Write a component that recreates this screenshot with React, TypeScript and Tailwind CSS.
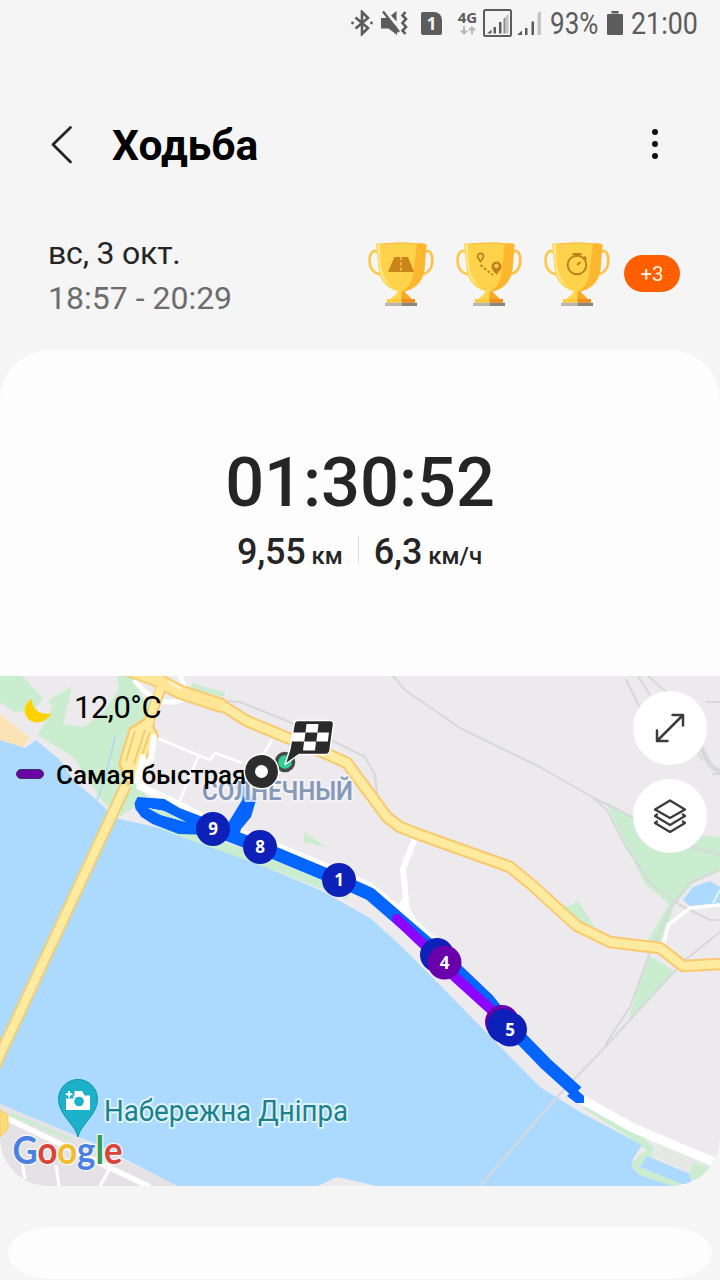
import type { ReactNode } from "react";

interface MarkerData {
  x: number;
  y: number;
  label?: string;
  color: string;
}

const BLUE = "#0d20b8";
const PURPLE = "#6a00ab";

const markers: MarkerData[] = [
  { x: 213, y: 829, label: "9", color: BLUE },
  { x: 260, y: 847, label: "8", color: BLUE },
  { x: 339, y: 880, label: "1", color: BLUE },
  { x: 437, y: 955, color: BLUE },
  { x: 444.5, y: 962.5, label: "4", color: PURPLE },
  { x: 502, y: 1022, color: PURPLE },
  { x: 504, y: 1026, color: BLUE },
  { x: 510, y: 1029.5, label: "5", color: BLUE },
];

const MOTORWAY =
  "M127 669l28 10 25 13 43 14 24 15 36 15 44 18 20 9 40 54 13 10 15 6 95 34 22 18 45 41 33 16 50 6 23 18 37-2";

const StatusBar = () => (
  <div className="flex h-12 shrink-0 items-center justify-end pr-[22px] text-[#5c5c5c]">
    <svg className="-mt-[2px] h-[26px] w-[22px]" viewBox="0 0 22 26" fill="none" stroke="currentColor">
      <path d="M4.500 7.500L17 18l-6 6V2l6 6L4.500 18.500" strokeWidth="2.600" />
      <circle cx="1.500" cy="13" r="1.400" fill="currentColor" stroke="none" />
      <circle cx="20.500" cy="13" r="1.400" fill="currentColor" stroke="none" />
    </svg>
    <svg className="-mt-[2px] ml-2 h-[26px] w-[27px]" viewBox="0 0 27 26" fill="currentColor">
      <path d="M0 8h6l10 9v8L7.500 18.500H0z" />
      <path d="M10 5.500L15.500 1v10.500z" />
      <path d="M2 1.500l16 20.500" stroke="currentColor" strokeWidth="2.400" />
      <path d="M24.500 2l-3 3.500 3.500 3.500-3.500 4 3.500 4-3.500 3.500 3 3.500" fill="none" stroke="currentColor" strokeWidth="2.600" />
    </svg>
    <div className="-mt-[2px] ml-[13px] flex h-[23px] w-[21px] items-center justify-center rounded-[2px] rounded-tr-[8px] bg-[#5c5c5c] font-['Open_Sans'] text-[17px] leading-none font-bold text-[#f5f5f5]">
      1
    </div>
    <div className="-mt-[2px] ml-[15px] flex h-[26px] w-[21px] flex-col items-center">
      <span className="font-['Open_Sans'] text-[15px] leading-[15px] font-bold">4G</span>
      <svg className="mt-px h-[9px] w-[16px]" viewBox="0 0 16 9" fill="none" stroke="#b9b9b9" strokeWidth="2">
        <path d="M4 0v7M1 4.500l3 3 3-3M12 8.500V1.500M9 4.500l3-3 3 3" />
      </svg>
    </div>
    <svg className="-mt-[2px] ml-[5px] h-[28px] w-[29px]" viewBox="0 0 29 28">
      <rect x="1" y="1" width="27" height="26" rx="1.500" fill="none" stroke="currentColor" strokeWidth="2" />
      <path d="M4 24.500l4.500-4v4zM10.500 18h2.500v6.500h-2.500zM16 13h2.500v11.500H16z" fill="currentColor" />
      <path d="M20.500 9.500L22.500 8v16.500h-2z" fill="#8b8b8b" />
      <path d="M23 7l2.500-2v19.500H23z" fill="#c3c3c3" />
    </svg>
    <svg className="-mt-[2px] ml-[5px] h-[28px] w-[24px]" viewBox="0 0 24 28">
      <path d="M0 26l5-4.500V26zM8 19h2.500v7H8zM14.500 12.500H17V26h-2.500z" fill="currentColor" />
      <path d="M20.500 4.500L24 2v24h-3.500z" fill="#c3c3c3" />
    </svg>
    <span className="-mt-px ml-[9px] w-[49px] font-[Roboto] text-[31px] leading-none">
      <span className="inline-block origin-left scale-x-[0.84]">93%</span>
    </span>
    <svg className="-mt-[2px] ml-[8px] h-[24px] w-[16px]" viewBox="0 0 16 24" fill="currentColor">
      <path d="M4.500 0h7v2.500h-7zM1 3h14a1 1 0 0 1 1 1v19a1 1 0 0 1-1 1H1a1 1 0 0 1-1-1V4a1 1 0 0 1 1-1z" />
    </svg>
    <span className="-mt-px ml-[8px] w-[67px] font-[Roboto] text-[31px] leading-none">
      <span className="inline-block origin-left scale-x-[0.865]">21:00</span>
    </span>
  </div>
);

const Trophy = ({ children }: { children: ReactNode }) => (
  <svg className="h-[66px] w-[66px]" viewBox="0 0 66 66">
    <path d="M9.500 9.500C4 7 1.500 13 1.600 19c.2 7 4 13 12.500 13.500" fill="none" stroke="#fbca4c" strokeWidth="2.800" />
    <path d="M57 9.500c5.500-2.500 7.500 3.500 7.300 9.500-.2 7-4 13-12.500 13.500" fill="none" stroke="#fbc24a" strokeWidth="2.800" />
    <path d="M31 47h5l2 4.500 6 5.500H22.500l6-5.500z" fill="#ffd54c" />
    <path d="M34 47h2l2 4.500 6 5.500H33z" fill="#f9a825" />
    <path d="M8 2q25.500-3 50.500 0L56.500 27C55 41 44 49.500 33.500 49.500S12 41 10.500 27z" fill="#fed24b" />
    <path d="M49 1.300l9.500.7L56.500 27C55 41 44 49.500 33.500 49.500c7-3 11-10 12-19z" fill="#fdb72f" />
    <path d="M12 2.500C12.500 20 12 35 24 44.500 14.500 40 12 33 11 24L9 3z" fill="#ffe68c" />
    <path d="M8 2q25.500-3 50.500 0-25-1-50.500 0z" fill="#f9b93a" />
    <path d="M19 57h14.500v3.800H19z" fill="#ffca3a" />
    <path d="M33.500 57H47v3.800H33.500z" fill="#f08f1c" />
    <path d="M17 60.800h16.500V64H17z" fill="#b9b5ad" />
    <path d="M33.500 60.800H49V64H33.500z" fill="#8d8579" />
    {children}
  </svg>
);

const RoadIcon = () => (
  <g>
    <path d="M26.500 15H40l6 15H20z" fill="#cb831b" />
    <path d="M33 15v15" stroke="#f8c746" strokeWidth="1.600" strokeDasharray="3 2.200" />
  </g>
);

const RouteIcon = () => (
  <g fill="none" stroke="#c07f1b">
    <path d="M24.500 19.500c-1.800-2.500-2.900-3.500-2.900-5.200a2.900 2.900 0 0 1 5.800 0c0 1.700-1.100 2.700-2.900 5.200z" strokeWidth="1.700" />
    <path d="M40.500 33c-2.500-4-5-5.500-5-8.500a5 5 0 0 1 10 0c0 3-2.500 4.500-5 8.500z" fill="#c07f1b" stroke="none" />
    <circle cx="40.500" cy="24" r="2.300" fill="#f8c746" stroke="none" />
    <path d="M24.500 23l6 5 6.500 5" strokeWidth="1.700" strokeDasharray="2.700 2" />
  </g>
);

const TimerIcon = () => (
  <g fill="none" stroke="#c07f1b" strokeWidth="1.900">
    <circle cx="33" cy="23" r="9.300" />
    <path d="M28.500 12h9M33 12v2M39.500 14.500l3 2.500M33 23l3.500-3" />
  </g>
);

const HeaderBar = () => (
  <header className="flex h-[194px] shrink-0 items-center justify-between pr-[62px] pl-[49px]">
    <div className="flex items-center">
      <svg className="-mt-px h-[40px] w-[24px]" viewBox="0 0 24 40" fill="none" stroke="#252525" strokeWidth="2.800" strokeLinecap="round" strokeLinejoin="round">
        <path d="M21.500 2.500L4 19.500 21.500 37" />
      </svg>
      <h1 className="mt-[2px] ml-[39px] font-[Roboto] text-[42.500px] leading-none font-bold text-black">Ходьба</h1>
    </div>
    <div className="-mt-[2px] flex flex-col gap-[6px]">
      <span className="size-[6px] rounded-full bg-[#111]" />
      <span className="size-[6px] rounded-full bg-[#111]" />
      <span className="size-[6px] rounded-full bg-[#111]" />
    </div>
  </header>
);

const WorkoutInfo = () => (
  <section className="flex h-[108px] shrink-0 items-start justify-between pr-10 pl-[49px]">
    <div className="-mt-[11px] font-[Roboto] text-[32px] leading-[45px]">
      <p className="-ml-px tracking-[-0.2px] text-[#252525]">вс, 3 окт.</p>
      <p className="-ml-px text-[#6c6c6c]">18:57 - 20:29</p>
    </div>
    <div className="flex items-start">
      <div className="flex gap-[22px]">
        <Trophy>
          <RoadIcon />
        </Trophy>
        <Trophy>
          <RouteIcon />
        </Trophy>
        <Trophy>
          <TimerIcon />
        </Trophy>
      </div>
      <span className="mt-[13px] ml-[14px] flex h-[37px] w-[56px] items-center justify-center rounded-full bg-[#ff5f00] pt-[2px] font-[Roboto] text-[20.500px] text-[#fff3e0]">
        +3
      </span>
    </div>
  </section>
);

const Summary = () => (
  <div className="flex h-[326px] flex-col items-center pt-[98px] font-[Roboto] font-medium text-[#252525]">
    <p className="text-[68.500px] leading-[70px]">01:30:52</p>
    <div className="mt-[16px] mr-px flex items-center">
      <p className="flex items-baseline gap-[6px] leading-[36px]">
        <span className="text-[36px] tracking-[-0.2px]">9,55</span>
        <span className="text-[24px]">км</span>
      </p>
      <span className="mr-[15px] ml-[15px] -mt-[8px] h-[28px] w-px bg-[#dedede]" />
      <p className="flex items-baseline gap-[6px] leading-[36px]">
        <span className="text-[36px] tracking-[-0.2px]">6,3</span>
        <span className="text-[24px]">км/ч</span>
      </p>
    </div>
  </div>
);

const MapCanvas = () => (
  <svg className="block h-[510px] w-[720px]" viewBox="0 676 720 510" strokeLinejoin="round">
    <rect x="0" y="676" width="720" height="510" fill="#eceaed" />

    {/* parks */}
    <g fill="#caedcf">
      <path d="M0 676h22l21 23-10 12-18 1-15-10z" />
      <path d="M48 701l24-15-9 38 20 3 20-14 16-24-2-13h16l8 20 15 10-10 30-15 20 3 22 15 22-16 8-12 8-18-14-30-45-35-22 15-28z" />
      <path d="M192 683l34 10-3 4-32-8zM304 832l22 15-22-5z" />
      <path d="M605 801l28 16 60 18 27 2v32l-26 13-20 24-5 16-9 20h-13l22-38-24-20z" />
      <path d="M648 955l26 16-46 51 4-15zM565 908l13-7 19 30-14-4z" />
    </g>
    <path d="M0 714l30 24-8 10-22-8z" fill="#fbe3b5" />

    {/* river */}
    <path
      d="M0 740l25 8 11-8 24 20 15 22 22 18 18 18 45 10 40 12 65 27 55 23 50 28 30 27 30 30 110 112 40 25 62 33-9 14v10l44 17H377l-40-9-19 9H177L100 1146 0 1104z"
      fill="#acdaff"
    />
    <path d="M115 736l-4 18-7 28-7 18" fill="none" stroke="#b1d5f5" strokeWidth="1.500" />
    <path d="M160 829l105 38 55 21 28 12-4-10-84-36-95-31z" fill="#caedcf" />
    <path d="M586 1106l56 35 12 12-10 3-9 9 6 7 40 13" fill="none" stroke="#caedcf" strokeWidth="7" />
    <path d="M650 1154l44 21 14 12 12-3v-26l-60-15z" fill="#e5e8e5" />
    <path d="M647 1156l48 20-8 10-47-19z" fill="#acdaff" />
    <path d="M693 1163l22 6v16h-12l-14-8z" fill="#caedcf" />
    <path d="M683 900l10-13 17-6 10 6v16l-30 3z" fill="#acdaff" />
    <path d="M713 903l7-13" stroke="#e4f4e8" strokeWidth="2" />

    {/* south bank */}
    <path d="M0 1104l100 44 77 38H0z" fill="#e5e2e6" />
    <path d="M10 1114l62 26" stroke="#caedcf" strokeWidth="3" />
    <path d="M0 1115l150 72" stroke="#fff" strokeWidth="5.500" />
    <path d="M22 1162l3 17M56 1165l3 21M109 1170l-9 16" stroke="#fff" strokeWidth="3" />
    <path d="M0 1110l8 5v14l-8 8z" fill="#fddb7b" stroke="#f8c866" />

    {/* railways */}
    <g fill="none" stroke="#d6d8da" strokeWidth="2">
      <path d="M393 676l12 14 55 38 80 39 52 30 40 20 60 30 28 8" />
      <path d="M592 797l15 13 18 35 25 38 30 22 30 15h10M720 870l-32 14-17 24" />
      <path d="M720 932l-35 28-57 62-21 23-50 52-37 43-40 46M673 903l-25 55-18 49-25 38" />
      <path d="M225 701l15 1 45 18 50 22 30 15 10 18 2 20M180 690l-40-14" />
      <path d="M626 679l8 17 6 12M638 676l12 19M648 676l18 16M706 702h14M697 752l6 9M712 774h8" />
      <path d="M700 746l10 19 12 9" strokeWidth="5" />
    </g>

    {/* streets */}
    <g fill="none" stroke="#fff">
      <path d="M157 738l53 22 5-7 27 10M198 757l-19 46M272 740l-10 17" strokeWidth="2.500" />
      <path d="M137 785l28 13 48 24 47 17 79 33 31 14 35 29 50 44" strokeWidth="7" />
      <path d="M415 838l-12 31 4 41" strokeWidth="6" />
      <path d="M404 898l9 17 8 17-25-24z" fill="#fff" />
      <path d="M583 1100l50 28 81 34" strokeWidth="9" />
      <path d="M720 905l-30 3-22 17-5 21" strokeWidth="3.500" />
      <path d="M134 680q18 22 36 22t16-12l-6-14" strokeWidth="5" />
    </g>

    {/* motorway and bridge: casing first, light fill on top */}
    <g fill="none">
      <g stroke="#fac96d">
        <path d="M126 785L-8 1072" stroke="#ecd082" strokeWidth="12.500" />
        <path d="M148 726l4-14 10-26" strokeWidth="11" />
        <path d="M119 764l11-36 19-12 9 20-8 16-13 26-9 7z" fill="#fac96d" strokeWidth="2" />
        <path d={MOTORWAY} strokeWidth="12.500" />
        <path d="M122 667l33 12 25 13 43 14" strokeWidth="15" />
      </g>
      <g stroke="#ffeb9f">
        <path d="M126 785L-8 1072" strokeWidth="8" />
        <path d="M148 726l4-14 10-28" strokeWidth="8" />
        <path d="M121 763l10-33 17-11 8 17-8 15-13 26-6 5z" fill="#ffeb9f" strokeWidth="1" />
        <path d={MOTORWAY} strokeWidth="8.500" />
        <path d="M122 667l33 12 25 13 43 14" stroke="#ffe594" strokeWidth="11.500" />
      </g>
      <path d="M126 761l9-30M134 764l11-34M141 758l9-26" stroke="#f5c964" strokeWidth="1.800" />
      <path d="M168 682l14 7" stroke="#fff3d6" strokeWidth="2" />
    </g>
    <path d="M154 737l-3 22-5 4M143 757l-6 24 8 8" fill="none" stroke="#fff" strokeWidth="6" strokeLinecap="round" />

    {/* walked route */}
    <path d="M246 780l9 20-12 1-8-14z" fill="#7fb3f8" />
    <path d="M244 797h13l-6 20-10 12-2 8-14-9z" fill="#0465ff" />
    <path
      d="M134.500 803l3-6 27 2 15 9 26 10 10 12-5 5-32-1-26-10-11-7-6-8zM148 808l13 7 25 7-22-11z"
      fill="#0465ff"
      fillRule="evenodd"
    />
    <path d="M148 808l13 7 25 7-22-11z" fill="#caedcf" />
    <path d="M205 826l55 21 79 33 31 14 30 26 44 38 44 42 20 25 38 39 31 28" fill="none" stroke="#0465ff" strokeWidth="13" />
    <path d="M575 1088l9 8v7h-8l-9-7z" fill="#0465ff" />
    <path d="M397 919l44 42M444 967l52 47" stroke="#8e05ff" strokeWidth="10" strokeLinecap="round" />

    <g fontFamily="Roboto" paintOrder="stroke" strokeWidth="4">
      <text x="202" y="800" fontSize="25.500" fontWeight="600" textLength="151" lengthAdjust="spacingAndGlyphs" fill="#8799b8" stroke="#f6f6fa" strokeOpacity=".8">
        СОЛНЕЧНЫЙ
      </text>
      <text x="104" y="1120.500" fontSize="29.500" textLength="244" lengthAdjust="spacingAndGlyphs" fill="#1b818c" stroke="#def3fd">
        Набережна Дніпра
      </text>
    </g>

    {/* place pin */}
    <path d="M78 1137c-2-12-19.500-22-19.500-38a19.500 19.500 0 0 1 39 0c0 16-17.500 26-19.500 38z" fill="#1cb1c8" stroke="#1594a7" />
    <path d="M66 1095.500h8.500V1091H82l2.500 4.500h5.500V1110H66z" fill="#fff" />
    <circle cx="79" cy="1101.500" r="4.800" fill="#1cb1c8" />
    <path d="M64.500 1089.500h9v9h-9z" fill="#1cb1c8" />
    <path d="M69 1091v6.500M65.800 1094.300h6.500" stroke="#fff" strokeWidth="2" />

    <text
      x="12.500"
      y="1164"
      fontFamily="Lato"
      fontSize="37.500"
      fontWeight="700"
      textLength="110"
      lengthAdjust="spacingAndGlyphs"
      stroke="#f4f6f9"
      strokeWidth="2.500"
      paintOrder="stroke"
    >
      <tspan fill="#4a80e0">G</tspan>
      <tspan fill="#d9453b">o</tspan>
      <tspan fill="#f0bd2c">o</tspan>
      <tspan fill="#4a80e0">g</tspan>
      <tspan fill="#2f9e50">l</tspan>
      <tspan fill="#d9453b">e</tspan>
    </text>

    {/* kilometre markers */}
    {markers.map((marker) => (
      <g key={`${marker.x}-${marker.y}`}>
        <circle cx={marker.x} cy={marker.y} r="17" fill={marker.color} />
        {marker.label && (
          <text x={marker.x} y={marker.y + 6} fontFamily="Open Sans" fontSize="17" fontWeight="700" textAnchor="middle" fill="#fff">
            {marker.label}
          </text>
        )}
      </g>
    ))}
  </svg>
);

// drawn above the legend text
const FinishFlag = () => (
  <svg className="absolute top-[40px] left-[240px] h-[76px] w-[100px]" viewBox="240 716 100 76">
    <circle cx="285" cy="762" r="8.500" fill="#33d092" stroke="#454b49" strokeWidth="3.500" />
    <circle cx="261.500" cy="771.500" r="12" fill="#fff" stroke="#fff" strokeWidth="12" />
    <circle cx="261.500" cy="771.500" r="11.500" fill="#fff" stroke="#2d2d2d" strokeWidth="10" />
    <path d="M294 720.500h36q4 0 3.500 4l-3.500 26q-.5 4-5 4h-26l-14 10 5-16 4-24q.5-4 4-4z" fill="#2a2a2a" stroke="#fff" strokeWidth="1.500" strokeLinejoin="round" />
    <path d="M306.500 724h12l-1 8.500h-12zM293 732.500h12.500l-1.200 9H291.500zM317.500 732.500H329l-1.200 9h-11.500zM304 741.500h12l-1 9h-12z" fill="#fff" />
  </svg>
);

const RouteMap = () => (
  <div className="relative h-[510px] overflow-hidden rounded-b-[48px]">
    <MapCanvas />
    <div className="absolute top-[12px] left-[21px] flex items-center font-[Roboto] text-black">
      <svg className="mt-[2px] h-[40px] w-[32px]" viewBox="0 0 32 40">
        <path d="M11 9C4 12 1.500 21 6 27.500c5.500 7.500 18 7 24.500-4.500-9 2.500-20-2-19.500-14z" fill="#ffd200" />
      </svg>
      <span className="-mt-[2px] ml-[21px] text-[31px] leading-[40px] tracking-[-0.500px]">12,0°C</span>
    </div>
    <div className="absolute top-[84px] left-[16px] flex items-center font-[Roboto] text-black">
      <span className="-mt-[2px] h-[10px] w-[28px] rounded-full border border-[#43335b] bg-[#6a05a5]" />
      <span className="ml-[12px] text-[26px] leading-[30px] font-medium whitespace-nowrap">Самая быстрая</span>
    </div>
    <FinishFlag />
    <div className="absolute top-[15px] right-[13px] flex flex-col gap-[14px]">
      <button className="flex size-[74px] items-center justify-center rounded-full bg-white" aria-label="Развернуть">
        <svg className="size-[32px]" viewBox="0 0 32 32" fill="none" stroke="#3c3c3c" strokeWidth="2.500" strokeLinecap="round" strokeLinejoin="round">
          <path d="M3 29L29 3M18.500 3H29v10.500M3 18.500V29h10.500" />
        </svg>
      </button>
      <button className="flex size-[74px] items-center justify-center rounded-full bg-white" aria-label="Слои">
        <svg className="h-[34px] w-[34px]" viewBox="0 0 34 34" fill="none" stroke="#3c3c3c" strokeWidth="2.300" strokeLinecap="round" strokeLinejoin="round">
          <path d="M17 1.500L32 10.500 17 19 2 10.500z" />
          <path d="M4 15.500l-2 1.500 15 9 15-9-2-1.500M4 22.500L2 24l15 9 15-9-2-1.500" />
        </svg>
      </button>
    </div>
  </div>
);

export default function App() {
  return (
    <main className="flex h-[1280px] w-[720px] flex-col overflow-hidden bg-[#f5f5f5]">
      <StatusBar />
      <HeaderBar />
      <WorkoutInfo />
      <section className="shrink-0 overflow-hidden rounded-t-[50px] rounded-b-[48px] bg-[#fdfdfd]">
        <Summary />
        <RouteMap />
      </section>
      <section className="mx-2 mt-[41px] h-[52px] shrink-0 rounded-[44px/26px] bg-[#fdfdfd]" />
    </main>
  );
}
